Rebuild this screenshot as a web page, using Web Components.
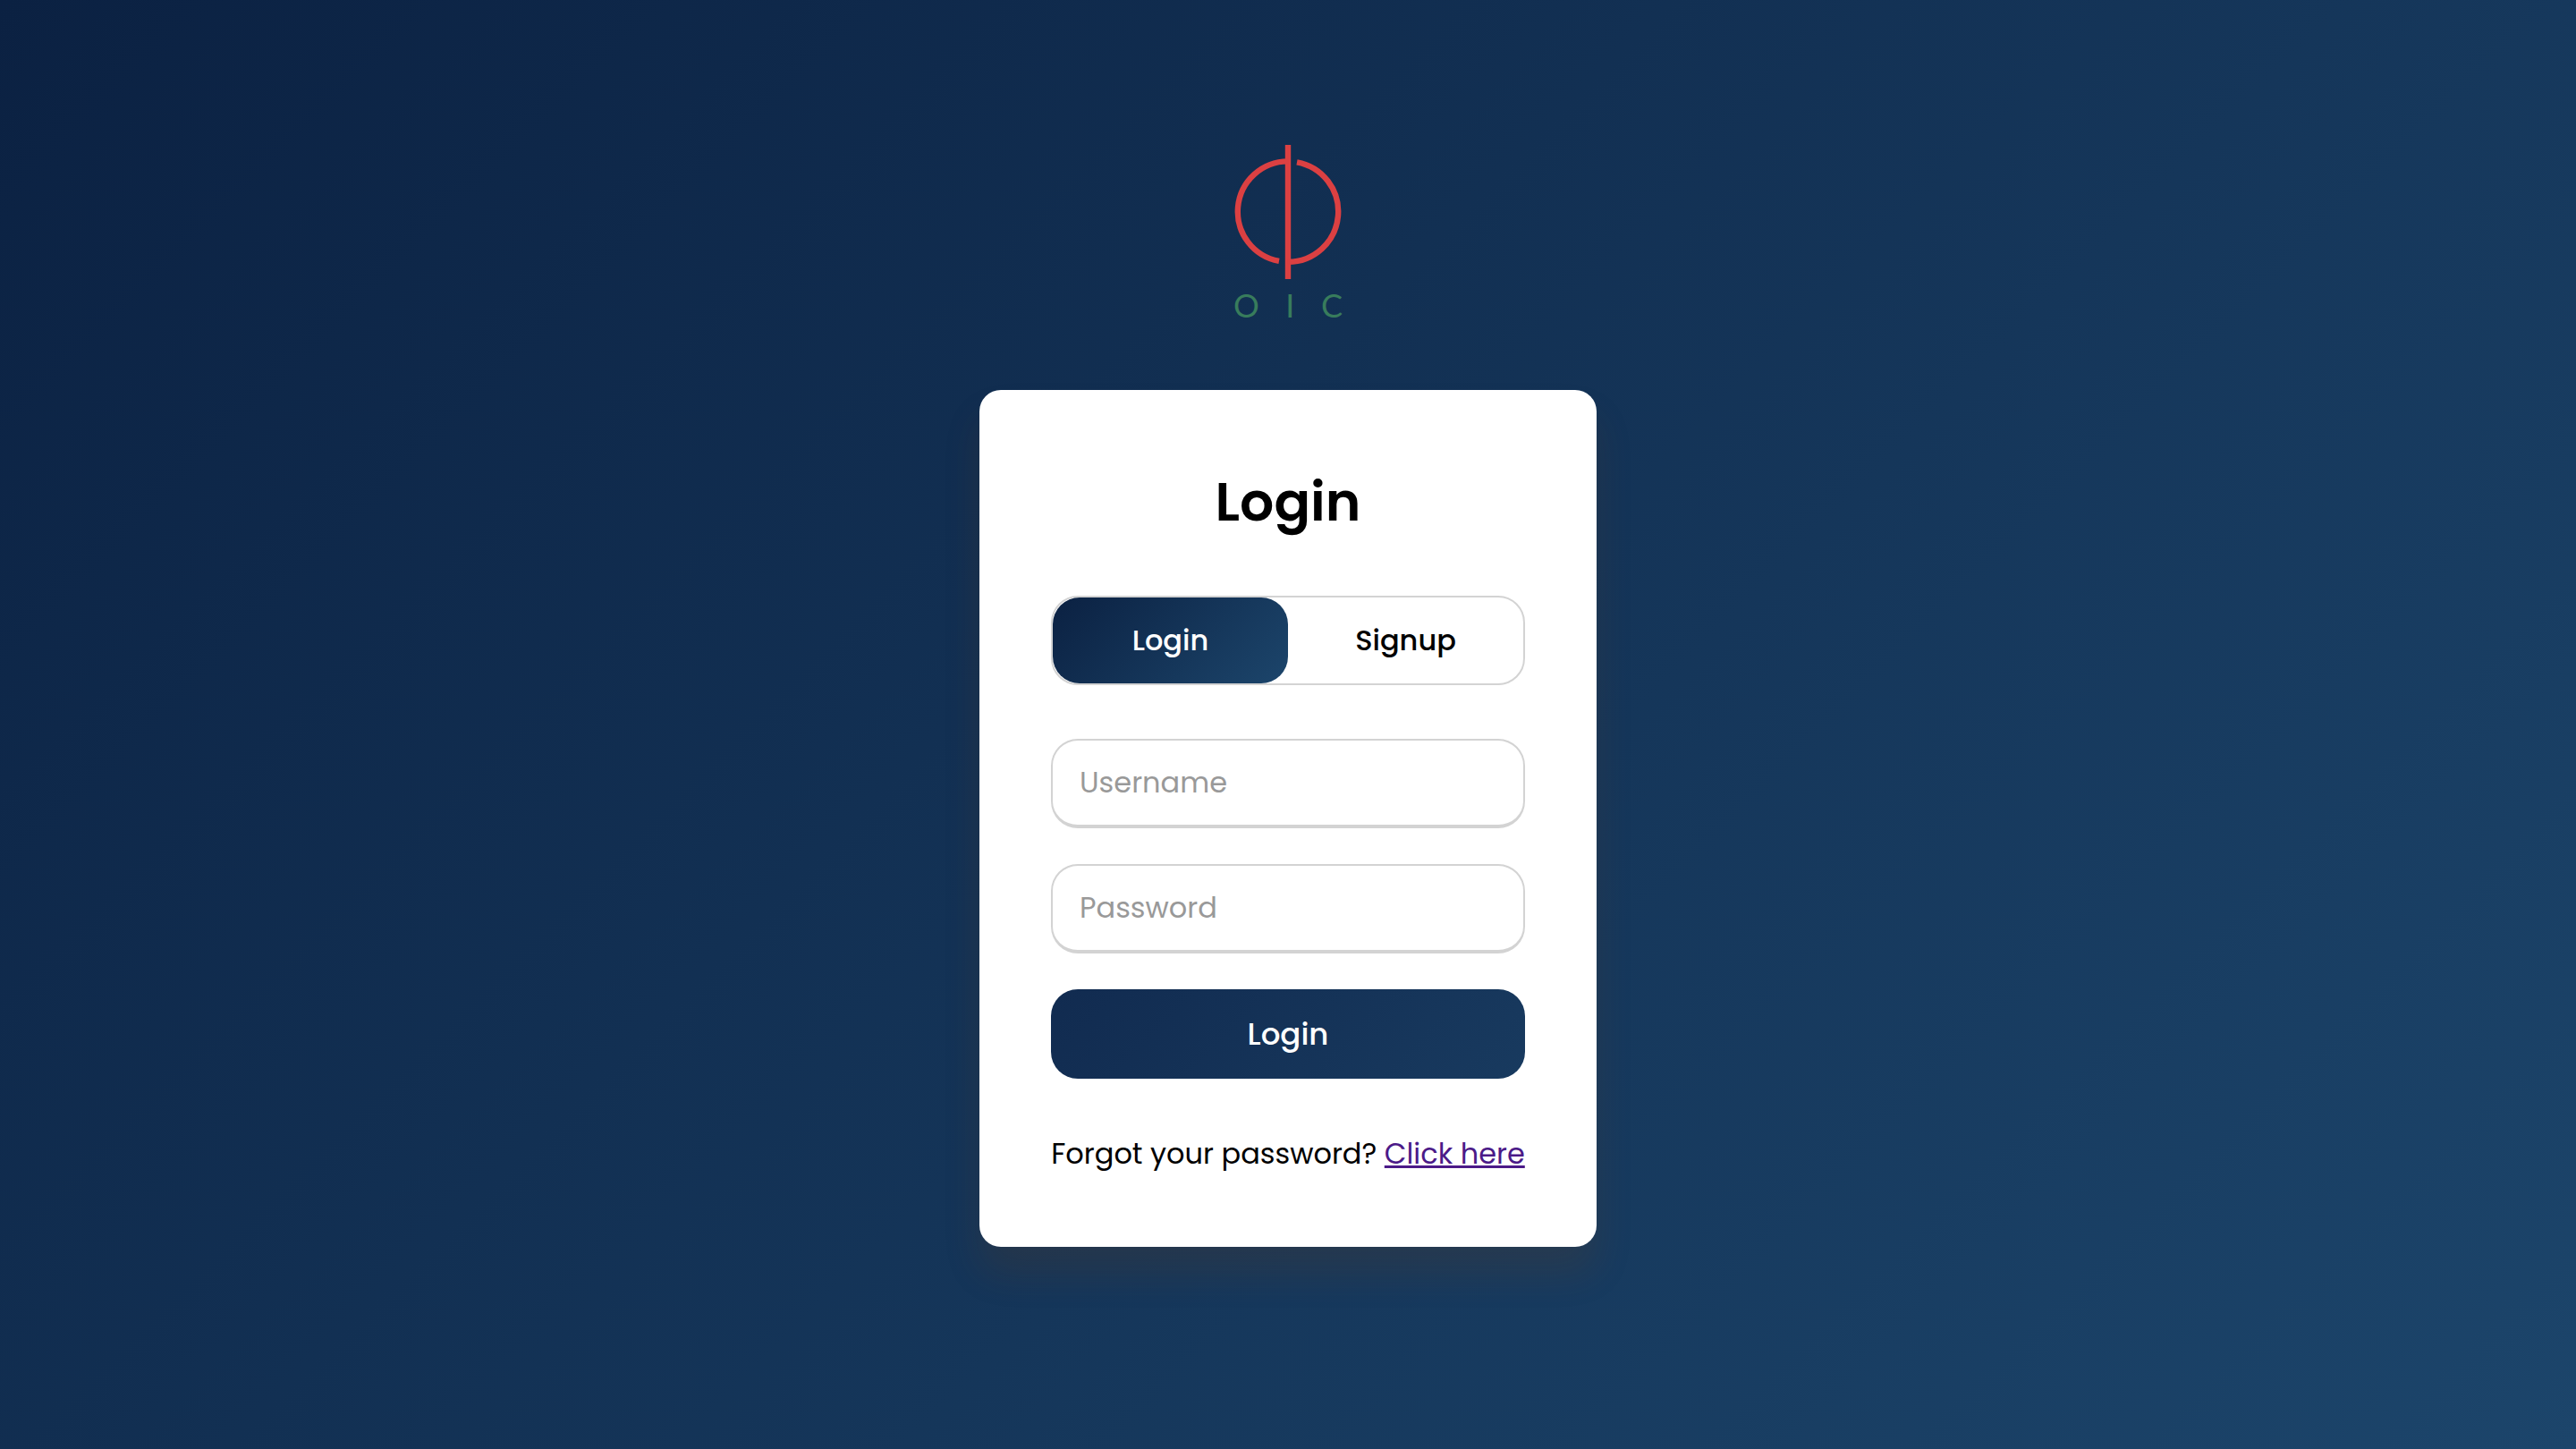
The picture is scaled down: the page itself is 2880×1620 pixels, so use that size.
<!DOCTYPE html>
<html lang="en">
<head>
<meta charset="utf-8">
<meta name="viewport" content="width=device-width, initial-scale=1">
<title>OIC Login</title>
<style>
  :root {
    --brand-gradient: linear-gradient(135deg, #0b2142, #1c456b);
    --line: #d3d3d3;
    --radius: 30px;
  }
  * { box-sizing: border-box; }
  body {
    margin: 0;
    font-family: Poppins, Inter, sans-serif;
    font-size: 32px;
    line-height: 48px;
    color: #000;
  }
</style>
</head>
<body>
<login-page>
  <brand-logo slot="logo"></brand-logo>
  <auth-card heading="Login">
    <auth-tabs></auth-tabs>
    <login-form></login-form>
  </auth-card>
</login-page>

<script>
const define = (name, html, setup) => {
  const template = document.createElement('template');
  template.innerHTML = '<style>*{box-sizing:border-box}</style>' + html;
  customElements.define(name, class extends HTMLElement {
    constructor() {
      super();
      this.attachShadow({ mode: 'open' }).append(template.content.cloneNode(true));
    }
    connectedCallback() { if (setup) setup(this, this.shadowRoot); }
  });
};

define('login-page', `
  <style>
    :host { display: block; background: var(--brand-gradient); }
    main {
      min-height: 100vh;
      padding: 0 16px 64px;
      display: flex;
      flex-direction: column;
      align-items: center;
      justify-content: center;
      gap: 77px;
    }
  </style>
  <main><slot name="logo"></slot><slot></slot></main>
`);

define('brand-logo', `
  <style>
    :host { display: flex; flex-direction: column; align-items: center; gap: 11px; width: 122px; }
    svg { display: block; width: 120px; height: 150px; }
    .name {
      display: flex;
      align-self: stretch;
      justify-content: space-between;
      font-family: Lato, sans-serif;
      font-size: 36px;
      line-height: 36px;
      color: #387c5c;
    }
  </style>
  <svg viewBox="0 0 120 150" fill="none" stroke="#db4042" stroke-width="6.4" aria-hidden="true">
    <path d="M60 0V150"/>
    <path d="M60 18.4A56.2 56.2 0 0 0 50 129.9"/>
    <path d="M70 19.3A56.2 56.2 0 0 1 60 130.8"/>
  </svg>
  <div class="name"><span>O</span><span>I</span><span>C</span></div>
`);

define('auth-card', `
  <style>
    :host {
      display: flex;
      flex-direction: column;
      gap: 60px;
      width: 690px;
      max-width: 100%;
      padding: 80px;
      border-radius: 24px;
      background: #fff;
      box-shadow: 0 30px 40px rgba(128, 60, 0, 0.15);
    }
    h1 { margin: 0; font-size: 60px; line-height: 90px; font-weight: 600; text-align: center; }
  </style>
  <h1></h1>
  <slot></slot>
`, (host, root) => { root.querySelector('h1').textContent = host.getAttribute('heading'); });

define('auth-tabs', `
  <style>
    :host { display: block; }
    .tabs {
      display: flex;
      height: 100px;
      border: 2px solid var(--line);
      border-radius: var(--radius);
    }
    button {
      flex: 1;
      padding: 0;
      border: 0;
      border-radius: var(--radius);
      background: none;
      color: #000;
      font: inherit;
      font-weight: 500;
      cursor: pointer;
    }
    button[aria-selected="true"] { background: var(--brand-gradient); color: #fff; }
  </style>
  <div class="tabs" role="tablist">
    <button type="button" role="tab" aria-selected="true">Login</button>
    <button type="button" role="tab" aria-selected="false">Signup</button>
  </div>
`);

define('login-form', `
  <style>
    :host { display: block; }
    form { display: flex; flex-direction: column; gap: 40px; }
    input {
      display: block;
      width: 100%;
      height: 100px;
      padding: 0 30px;
      border: 2px solid var(--line);
      border-bottom-width: 4px;
      border-radius: var(--radius);
      background: #fff;
      color: #000;
      font: inherit;
      outline: none;
    }
    input::placeholder { color: #999; opacity: 1; }
    button {
      height: 100px;
      border: 0;
      border-radius: var(--radius);
      background: linear-gradient(135deg, #112b50, #183a5f);
      color: #fff;
      font: inherit;
      font-size: 34px;
      font-weight: 500;
      cursor: pointer;
    }
    p { margin: 20px 0 0; text-align: center; white-space: nowrap; }
    a { color: #4b1a88; }
  </style>
  <form>
    <input type="text" name="username" placeholder="Username" aria-label="Username" autocomplete="username">
    <input type="password" name="password" placeholder="Password" aria-label="Password" autocomplete="current-password">
    <button type="submit">Login</button>
    <p>Forgot your password? <a href="#reset">Click here</a></p>
  </form>
`);
</script>
</body>
</html>
